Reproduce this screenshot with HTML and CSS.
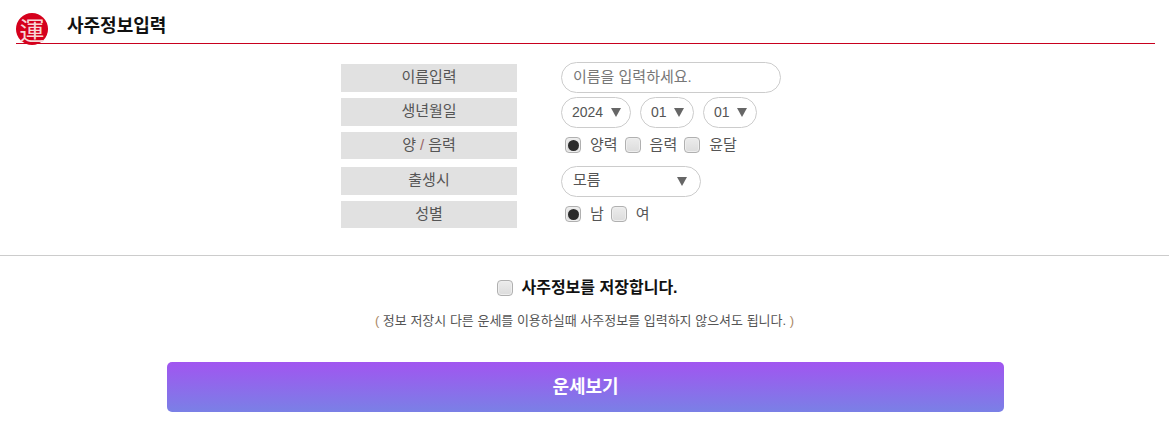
FILE: index.html
```html
<!DOCTYPE html>
<html lang="ko">
<head>
<meta charset="utf-8">
<title>사주정보입력</title>
<link rel="stylesheet" href="styles.css">
</head>
<body>
<header class="head">
  <span class="logo">運</span>
  <h2 class="title">사주정보입력</h2>
</header>
<form class="form">
  <div class="label row-a first">이름입력</div>
  <div class="field row-a"><input class="text" type="text" placeholder="이름을 입력하세요."></div>
  <div class="label row-a">생년월일</div>
  <div class="field row-a">
    <span class="sel w70"><select><option>2024</option></select></span>
    <span class="sel w54"><select><option>01</option></select></span>
    <span class="sel w54"><select><option>01</option></select></span>
  </div>
  <div class="label row-b spaced">양 <i class="slash">/</i> 음력</div>
  <div class="field row-b spaced checks">
    <label><input class="box" type="radio" name="cal" checked><span>양력</span></label>
    <label><input class="box" type="radio" name="cal"><span>음력</span></label>
    <label><input class="box" type="radio" name="cal"><span>윤달</span></label>
  </div>
  <div class="label row-a">출생시</div>
  <div class="field row-a"><span class="sel w140"><select class="ko"><option>모름</option></select></span></div>
  <div class="label row-b">성별</div>
  <div class="field row-b checks">
    <label><input class="box" type="radio" name="sex" checked><span>남</span></label>
    <label><input class="box" type="radio" name="sex"><span>여</span></label>
  </div>
</form>
<section class="save">
  <label class="save-check"><input class="box" type="checkbox"><span>사주정보를 저장합니다.</span></label>
  <p class="note"><i class="paren">(</i> 정보 저장시 다른 운세를 이용하실때 사주정보를 입력하지 않으셔도 됩니다. <i class="paren">)</i></p>
</section>
<div class="actions"><button class="go" type="button">운세보기</button></div>
</body>
</html>
```
FILE: styles.css
```css
* { box-sizing: border-box; }
html, body { margin: 0; padding: 0; }
body {
  width: 1169px;
  height: 422px;
  overflow: hidden;
  background: #fff;
  color: #555;
  font-family: "Liberation Sans", "Noto Sans CJK KR", sans-serif;
  font-size: 15px;
}
.head {
  display: flex;
  align-items: center;
  height: 44px;
  margin: 0 14px 0 16px;
  padding-top: 11px;
  border-bottom: 1px solid #c8001e;
}
.logo {
  flex: none;
  width: 32px;
  height: 32px;
  margin-bottom: -3px;
  border-radius: 50%;
  background: #d5001c;
  color: #f7d7d7;
  font: 25px/32px "Noto Sans CJK KR", sans-serif;
  text-align: center;
}
.title {
  margin: 0 0 3px 19px;
  color: #111;
  font-size: 18px;
  font-weight: 700;
  line-height: 20px;
}
.form {
  display: grid;
  grid-template-columns: 176px 220px;
  column-gap: 44px;
  row-gap: 4px;
  justify-content: start;
  margin: 18px 0 0 341px;
  padding-bottom: 27px;
}
.label {
  display: flex;
  align-items: flex-start;
  justify-content: center;
  gap: 4px;
  background: #e1e1e1;
  color: #555;
  line-height: 25px;
}
.label.row-a { height: 28px; margin-top: 1px; }
.label.row-a.first { margin-top: 2px; }
.label.row-b { height: 27px; }
.spaced { margin-bottom: 3px; }
.slash { font-style: normal; color: #966; }
.field { display: flex; gap: 9px; }
.field.row-a { height: 31px; }
.field.row-b { height: 27px; }
.text {
  width: 220px;
  height: 31px;
  padding: 0 11px 2px;
  border: 1px solid #ccc;
  border-radius: 16px;
  background: #fff;
  font: inherit;
  color: #555;
  outline: 0;
}
.text::placeholder { color: #777; opacity: 1; }
.sel { position: relative; display: block; height: 31px; }
.sel select {
  appearance: none;
  width: 100%;
  height: 31px;
  padding: 0 0 2px 10px;
  border: 1px solid #ccc;
  border-radius: 16px;
  background: #fff;
  color: #555;
  font: inherit;
  font-size: 14px;
}
.sel select.ko { font-size: 15px; padding: 0 0 5px 11px; }
.sel::after {
  content: "";
  position: absolute;
  top: 11px;
  right: 10px;
  border-style: solid;
  border-width: 9px 5px 0;
  border-color: #666 transparent transparent;
}
.w70 { width: 70px; }
.w54 { width: 54px; }
.w140 { width: 140px; }
.w140::after { right: 14px; }
.checks { align-items: center; gap: 7px; padding: 0 0 1px 4px; }
label { display: inline-flex; align-items: center; gap: 9px; line-height: 20px; }
.box {
  appearance: none;
  flex: none;
  position: relative;
  width: 16px;
  height: 16px;
  margin: 0;
  border: 1px solid #b0b0b0;
  border-radius: 4px;
  background: linear-gradient(#ececec, #dcdcdc);
  box-shadow: inset 0 0 0 1px #eee;
}
.box:checked::after {
  content: "";
  position: absolute;
  inset: 1.5px;
  border-radius: 50%;
  background: #2b2b2b;
}
.save { border-top: 1px solid #ccc; text-align: center; padding-top: 22px; }
.save-check { gap: 8px; margin-left: 6px; color: #111; font-size: 16px; font-weight: 700; }
.note { margin: 13px 0 0; font-size: 13px; line-height: 18px; color: #555; }
.paren { font-style: normal; color: #a86; }
.actions { margin: 32px 165px 0 167px; }
.go {
  display: block;
  width: 837px;
  height: 50px;
  padding: 0 0 4px;
  border: 0;
  border-radius: 5px;
  background: linear-gradient(#a155f0, #7a80e6);
  color: #fff;
  font: 700 18px "Liberation Sans", "Noto Sans CJK KR", sans-serif;
}
```
